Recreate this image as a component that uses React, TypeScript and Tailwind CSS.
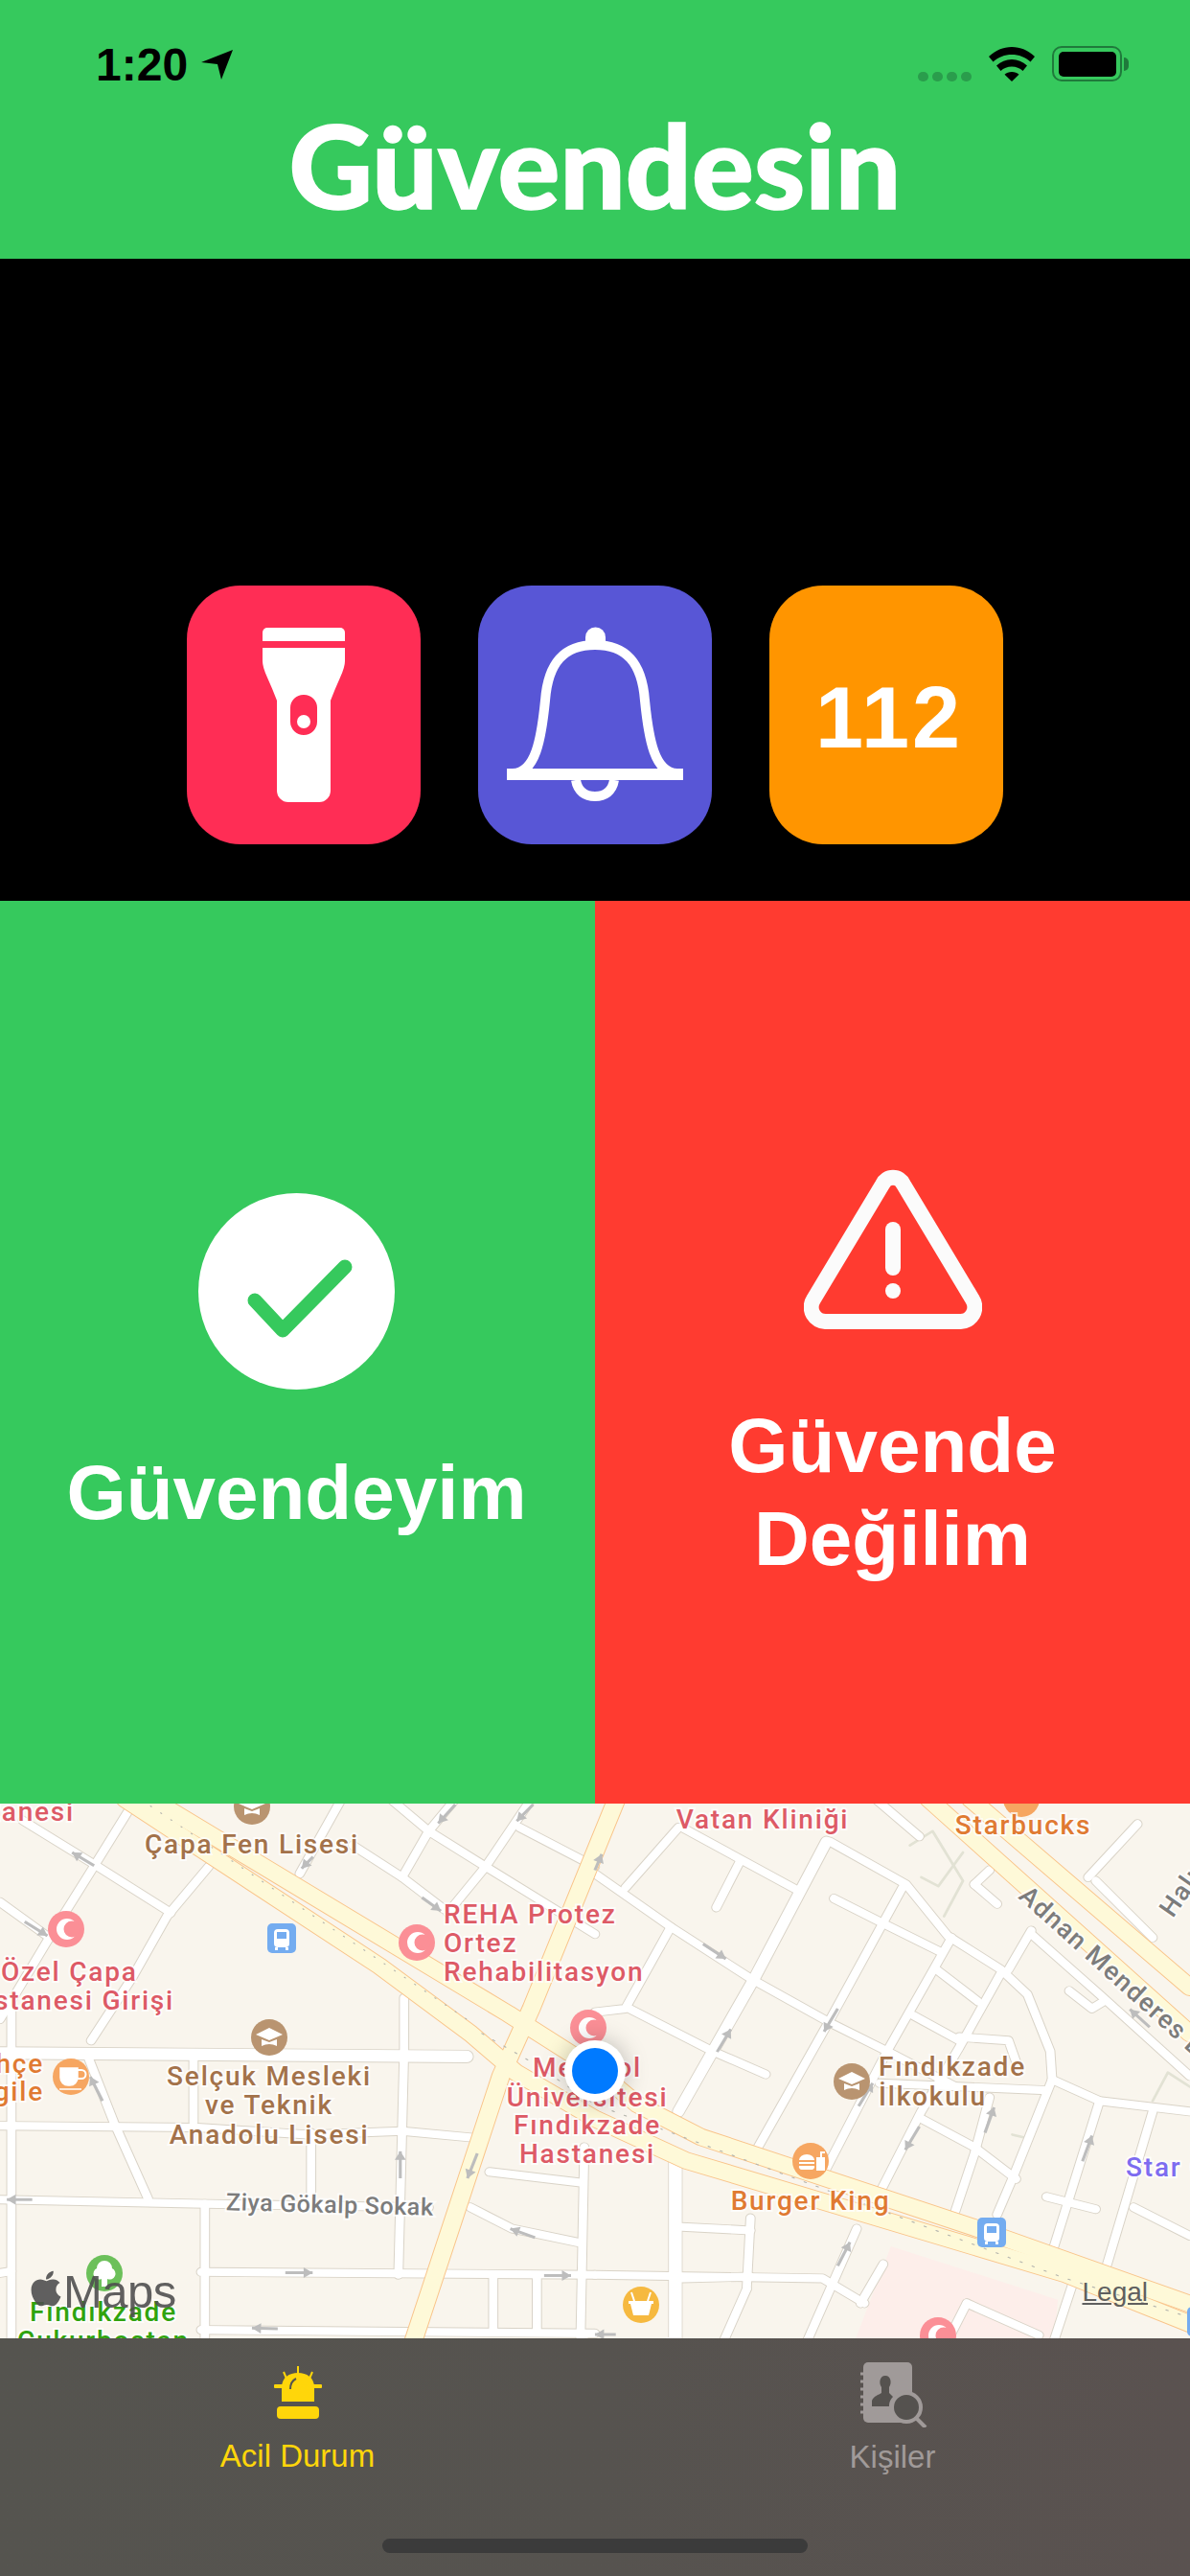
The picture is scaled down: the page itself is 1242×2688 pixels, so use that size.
import React from 'react';
import { FaApple } from 'react-icons/fa';

// road centre lines, in the coordinates of the left map crop (right half continues at x + 1568)
const RIGHT = 1568;
const shift = (pts: string) =>
  pts.split(' ').map((p) => {
    const [x, y] = p.split(',').map(Number);
    return `${x + RIGHT},${y}`;
  }).join(' ');

const smallRoads = [
  '60,80 250,205 450,340', '0,310 130,410', '340,50 250,205 130,410 40,570 0,640', '550,210 440,350 350,520 240,700',
  '900,20 790,230', '1200,20 1130,110 1060,240', '1400,20 1280,210 1180,340', '1030,20 1130,110 1280,210 1568,400',
  '930,150 1060,240 1170,330', '1370,100 1568,210', '1065,580 1065,730 1050,1360', '30,600 30,1545', '510,745 510,930',
  '230,740 300,930 390,1145', '0,940 520,945 810,965 1060,955 1260,975', '820,960 820,1150', '0,1148 540,1160 1130,1170',
  '1240,1170 1350,1230 1530,1270', '1290,1070 1530,1100', '540,1160 540,1545', '530,1352 1568,1360', '530,1515 1568,1525',
  '1300,1370 1300,1515', '1415,1370 1415,1515', '1540,1000 1530,1545', '0,1355 30,1350',
];

const smallRoadsRight = [
  '0,230 200,380 410,525 620,650 770,730 950,830', '620,140 820,260 930,405 1070,500 1140,570 1200,730 1205,810',
  '630,300 760,370 910,450', '320,325 380,200', '230,100 540,280', '810,270 620,640 430,1000', '940,410 770,730 610,1060',
  '1070,510 960,720 860,900 750,1130', '80,270 220,100', '0,620 80,610 200,380', '90,610 310,730 450,795', '310,730 220,900',
  '900,500 1010,590', '840,630 960,700', '960,690 1090,700 1110,760', '860,920 1000,1000 1110,1090', '1190,1140 1320,1175',
  '1205,810 1330,870 1568,900', '1205,810 1100,1090 1060,1190', '750,820 1190,840', '1040,860 1000,1020 950,1180',
  '1330,870 1210,1280', '1470,900 1350,1330', '1420,1170 1568,1250', '1150,400 1330,570 1568,800', '1150,390 1090,500',
  '1300,240 1430,90', '1320,250 1470,410', '1250,560 1310,610 1340,590', '1000,260 1060,315', '1000,260 1040,220',
  '740,20 855,125', '0,1360 600,1370 710,1440', '230,1225 410,1235', '230,1370 410,1365', '410,1200 400,1400',
  '690,1230 560,1545', '760,1330 700,1440', '980,1440 1170,1530', '980,1440 930,1545', '1270,1350 1210,1545', '400,1400 340,1545',
];

const boulevards = [
  '400,20 1340,625 1568,780 1680,880 1848,972 2568,1227 3136,1442',
  '330,20 1000,490 1240,680 1360,790 1568,920 1808,1038 2568,1281 2808,1358 3136,1498',
  '1625,20 1400,610 1320,800 1090,1545',
  '2448,20 3136,680',
  '2558,20 3136,550',
];

const arrows = [
  [248, 207, 190, 170], [65, 365, 125, 405], [270, 870, 238, 802], [1200, 35, 1155, 88], [1405, 35, 1362, 82], [825, 182, 795, 215],
  [1112, 297, 1162, 335], [85, 1148, 18, 1148], [1258, 1018, 1232, 1088], [1055, 1088, 1055, 1012], [1410, 1255, 1345, 1230],
  [752, 1354, 824, 1354], [1434, 1362, 1505, 1362], [732, 1512, 664, 1510],
].concat(
  [
    [285, 428, 345, 470], [322, 732, 358, 668], [640, 610, 604, 675], [695, 885, 732, 820], [855, 942, 818, 1008], [1028, 960, 1052, 888],
    [1285, 1040, 1310, 968], [1462, 662, 1410, 612], [640, 1335, 672, 1268], [0, 220, 18, 175], [55, 1528, 0, 1528],
  ].map(([a, b, c, d]) => [a + RIGHT, b, c + RIGHT, d]),
);

const labels: { t: string; x: number; y: number; c: string; a?: 'start' | 'middle' | 'end' }[] = [
  { t: 'Hastanesi', x: 78, y: 1900, c: '#dd5a66', a: 'end' },
  { t: 'Çapa Fen Lisesi', x: 263, y: 1934, c: '#a3724a', a: 'middle' },
  { t: 'Özel Çapa', x: 1, y: 2067, c: '#dd5a66' },
  { t: 'Hastanesi Girişi', x: 182, y: 2097, c: '#dd5a66', a: 'end' },
  { t: 'REHA Protez', x: 463, y: 2007, c: '#dd5a66' },
  { t: 'Ortez', x: 463, y: 2037, c: '#dd5a66' },
  { t: 'Rehabilitasyon', x: 463, y: 2067, c: '#dd5a66' },
  { t: 'Medipol', x: 613, y: 2167, c: '#dd5a66', a: 'middle' },
  { t: 'Üniversitesi', x: 613, y: 2198, c: '#dd5a66', a: 'middle' },
  { t: 'Fındıkzade', x: 613, y: 2227, c: '#dd5a66', a: 'middle' },
  { t: 'Hastanesi', x: 613, y: 2257, c: '#dd5a66', a: 'middle' },
  { t: 'Bahçe', x: 46, y: 2163, c: '#e07a32', a: 'end' },
  { t: 'Bilgile', x: 46, y: 2192, c: '#e07a32', a: 'end' },
  { t: 'Selçuk Mesleki', x: 281, y: 2176, c: '#a3724a', a: 'middle' },
  { t: 've Teknik', x: 281, y: 2206, c: '#a3724a', a: 'middle' },
  { t: 'Anadolu Lisesi', x: 281, y: 2237, c: '#a3724a', a: 'middle' },
  { t: 'Fındıkzade', x: 108, y: 2422, c: '#2fa30e', a: 'middle' },
  { t: 'Çukurbostan', x: 108, y: 2452, c: '#2fa30e', a: 'middle' },
  { t: 'Vatan Kliniği', x: 796, y: 1908, c: '#dd5a66', a: 'middle' },
  { t: 'Starbucks', x: 1068, y: 1914, c: '#e07a32', a: 'middle' },
  { t: 'Fındıkzade', x: 917, y: 2166, c: '#a3724a' },
  { t: 'İlkokulu', x: 917, y: 2197, c: '#a3724a' },
  { t: 'Star City', x: 1175, y: 2271, c: '#7d6cf0' },
  { t: 'Burger King', x: 846, y: 2306, c: '#e07a32', a: 'middle' },
  { t: 'File Market', x: 660, y: 2462, c: '#e07a32', a: 'middle' },
];

const Crescent = ({ x, y }: { x: number; y: number }) => (
  <g>
    <circle cx={x} cy={y} r={19} fill="#fb8f96" />
    <circle cx={x + 1} cy={y} r={11} fill="#fff" />
    <circle cx={x + 6} cy={y} r={8.5} fill="#fb8f96" />
  </g>
);

const Bus = ({ x, y }: { x: number; y: number }) => (
  <g>
    <rect x={x - 15} y={y - 15} width={30} height={31} rx={5} fill="#74acf0" />
    <rect x={x - 8} y={y - 9} width={16} height={19} rx={4} fill="#fff" />
    <rect x={x - 5} y={y - 6} width={10} height={7} fill="#74acf0" />
    <rect x={x - 7} y={y + 10} width={3} height={3} fill="#fff" />
    <rect x={x + 4} y={y + 10} width={3} height={3} fill="#fff" />
  </g>
);

const School = ({ x, y }: { x: number; y: number }) => (
  <g>
    <circle cx={x} cy={y} r={19} fill="#b99470" />
    <path d={`M${x - 14} ${y - 3}L${x} ${y - 10}L${x + 14} ${y - 3}L${x} ${y + 3}Z`} fill="#fff" />
    <path d={`M${x - 8} ${y + 2}V${y + 9}Q${x} ${y + 5} ${x + 8} ${y + 9}V${y + 2}L${x} ${y + 5}Z`} fill="#fff" />
  </g>
);

const FlashlightIcon = () => (
  <svg viewBox="0 0 244 270" className="h-full w-full">
    <path d="M79 58V49a5 5 0 0 1 5-5h76a5 5 0 0 1 5 5v9Z" fill="#fff" />
    <path
      fillRule="evenodd"
      fill="#fff"
      d="M79 65h86v14q0 6-5 17t-10 24v94a12 12 0 0 1-12 12h-32a12 12 0 0 1-12-12V120q-5-13-10-24t-5-17ZM122 114a13.500 13.500 0 0 0-14 14v14a14 14 0 0 0 28 0v-14a13.500 13.500 0 0 0-14-14Z"
    />
    <circle cx={122} cy={142} r={7} fill="#fff" />
  </svg>
);

const BellIcon = () => (
  <svg viewBox="0 0 244 270" className="h-full w-full" fill="none" stroke="#fff">
    <path d="M112 60V54a10.500 10.500 0 0 1 21 0v6Z" fill="#fff" stroke="none" />
    <path strokeWidth={10} d="M36 196C60 196 66 160 70 120C73 80 90 62 122 62C154 62 171 80 174 120C178 160 184 196 208 196" />
    <rect x={30} y={191} width={184} height={12} fill="#fff" stroke="none" />
    <path strokeWidth={10} d="M102 203C104 215 112 220 122 220C132 220 140 215 142 203" />
  </svg>
);

const WarningIcon = () => (
  <svg viewBox="0 0 186 169" className="h-[169px] w-[186px]" fill="none">
    <path stroke="#fbfbfb" strokeWidth={16} d="M82 18a12 12 0 0 1 22 0L176 138a15 15 0 0 1-13 23H23a15 15 0 0 1-13-23Z" strokeLinejoin="round" />
    <rect x={85} y={57} width={16} height={56} rx={8} fill="#fbfbfb" />
    <circle cx={93} cy={129} r={8} fill="#fbfbfb" />
  </svg>
);

const MapView = () => (
  <div className="relative h-[558px] overflow-hidden bg-[#f9f5ed] font-['Roboto',sans-serif]">
    <svg viewBox="0 1882 1242 558" className="block h-full w-full">
      <g transform="translate(0 1870) scale(0.396 0.3704)" fill="none" strokeLinejoin="round" strokeLinecap="round">
        <path d={`M${shift('780,1280 1220,1430 1210,1560 680,1560')}Z`} fill="#fdeeea" />
        <path d={`M${shift('830,150 890,110 970,250 920,350')}`} stroke="#e2e2d4" strokeWidth={7} />
        <path d={`M${shift('860,240 905,265 970,170')}`} stroke="#e2e2d4" strokeWidth={7} />
        <path d={`M${shift('1470,870 1510,790 1568,830')}`} stroke="#e2e2d4" strokeWidth={7} />
        <path d={`M${shift('1100,965 1140,975')}`} stroke="#e2e2d4" strokeWidth={7} />
        {smallRoads.map((p) => <polyline key={p} points={p} stroke="#d9d3c7" strokeWidth={27} />)}
        {smallRoadsRight.map((p) => <polyline key={p} points={shift(p)} stroke="#d9d3c7" strokeWidth={27} />)}
        <polyline points="0,735 1230,745" stroke="#d9d3c7" strokeWidth={38} />
        <polyline points={shift('610,140 420,525 220,900')} stroke="#d9d3c7" strokeWidth={34} />
        <polyline points={shift('212,1040 212,1545')} stroke="#d9d3c7" strokeWidth={38} />
        {smallRoads.map((p) => <polyline key={p} points={p} stroke="#fff" strokeWidth={22} />)}
        {smallRoadsRight.map((p) => <polyline key={p} points={shift(p)} stroke="#fff" strokeWidth={22} />)}
        <polyline points="0,735 1230,745" stroke="#fff" strokeWidth={33} />
        <polyline points={shift('610,140 420,525 220,900')} stroke="#fff" strokeWidth={29} />
        <polyline points={shift('212,1040 212,1545')} stroke="#fff" strokeWidth={34} />
        {boulevards.map((p) => <polyline key={p} points={p} stroke="#f9c48a" strokeWidth={50} />)}
        {boulevards.map((p) => <polyline key={p} points={p} stroke="#fef9d8" strokeWidth={45} />)}
        <polyline points="370,20 1230,640" stroke="#b5b5ae" strokeWidth={3} strokeDasharray="3 30" />
        <polyline points={`1270,680 1400,760 ${shift('0,880 1240,1370 1568,1480')}`} stroke="#b5b5ae" strokeWidth={3} strokeDasharray="6 28" />
        {arrows.map(([a, b, c, d]) => {
          const ang = Math.atan2(d - b, c - a);
          const h = (o: number) => `${c - 28 * Math.cos(ang + o)},${d - 28 * Math.sin(ang + o)}`;
          return (
            <g key={`${a}-${b}`}>
              <line x1={a} y1={b} x2={c} y2={d} stroke="#bdbdbd" strokeWidth={8} strokeLinecap="butt" />
              <polygon points={`${c},${d} ${h(0.55)} ${h(-0.55)}`} fill="#bdbdbd" />
            </g>
          );
        })}
      </g>

      <Crescent x={69} y={2013} />
      <Crescent x={435} y={2027} />
      <Crescent x={614} y={2116} />
      <Crescent x={979} y={2437} />
      <Bus x={294} y={2022} />
      <Bus x={1035} y={2329} />
      <Bus x={1254} y={2422} />
      <School x={263} y={1885} />
      <School x={281} y={2126} />
      <School x={889} y={2172} />
      <circle cx={74} cy={2167} r={19} fill="#f6a661" />
      <path d="M63 2158h18v10a8 8 0 0 1-8 8h-2a8 8 0 0 1-8-8ZM62 2180h23" fill="#fff" stroke="#fff" strokeWidth={1.5} />
      <path d="M81 2160h4a3 3 0 0 1 0 9h-4" fill="none" stroke="#fff" strokeWidth={2} />
      <circle cx={846} cy={2255} r={19} fill="#f6a661" />
      <path d="M834 2254a8 6 0 0 1 16 0ZM834 2256h16v2h-16ZM834 2260h16a3 3 0 0 1-3 4h-10a3 3 0 0 1-3-4ZM852 2251h9v14h-9Z" fill="#fff" />
      <path d="M857 2251v-5h4" stroke="#fff" strokeWidth={2} fill="none" />
      <circle cx={669} cy={2405} r={19} fill="#f6b940" />
      <path d="M658 2404h22l-3 12h-16ZM656 2401h26v3h-26Z" fill="#fff" />
      <path d="M662 2401l-3-9M676 2401l3-9" stroke="#fff" strokeWidth={2} />
      <circle cx={109} cy={2372} r={19} fill="#6cc05a" />
      <path d="M109 2359a8 8 0 0 1 8 8a6 6 0 0 1-5 11v8h-6v-8a6 6 0 0 1-5-11a8 8 0 0 1 8-8Z" fill="#fff" />
      <circle cx={1066} cy={1877} r={19} fill="#f6a661" />

      {labels.map((l) => (
        <text
          key={l.t + l.y}
          x={l.x}
          y={l.y}
          textAnchor={l.a ?? 'start'}
          fill={l.c}
          stroke="#fff"
          strokeOpacity={0.75}
          strokeWidth={4}
          paintOrder="stroke"
          className="text-[28px] font-medium tracking-[1.8px]"
        >
          {l.t}
        </text>
      ))}
      <text
        x={344}
        y={2309}
        textAnchor="middle"
        transform="rotate(1.5 344 2309)"
        fill="#7c7c7c"
        stroke="#fff"
        strokeOpacity={0.75}
        strokeWidth={4}
        paintOrder="stroke"
        className="text-[25px] font-medium tracking-[0.6px]"
      >
        Ziya Gökalp Sokak
      </text>
      <text
        x={1062}
        y={1980}
        transform="rotate(42 1062 1980)"
        fill="#7c7c7c"
        stroke="#fff"
        strokeOpacity={0.75}
        strokeWidth={4}
        paintOrder="stroke"
        className="text-[27px] font-medium tracking-[1.4px]"
      >
        Adnan Menderes Bulvarı
      </text>
      <text
        x={1224}
        y={2002}
        transform="rotate(-55 1224 2002)"
        fill="#7c7c7c"
        stroke="#fff"
        strokeOpacity={0.75}
        strokeWidth={4}
        paintOrder="stroke"
        className="text-[27px] font-medium tracking-[1.4px]"
      >
        Halıcılar
      </text>
    </svg>

    {/* location dot */}
    <div className="absolute left-[589px] top-[247px] flex h-[64px] w-[64px] items-center justify-center rounded-full bg-white shadow-[0_0_24px_rgba(0,0,0,0.25)]">
      <div className="h-[48px] w-[48px] rounded-full bg-[#007aff]" />
    </div>

    {/* apple maps attribution */}
    <div className="absolute bottom-[22px] left-[30px] flex items-center font-['Liberation_Sans',sans-serif] text-[#4f4f4f]/90">
      <FaApple className="mb-[6px] h-[42px] w-[36px]" />
      <span className="text-[49px] leading-[54px] tracking-[-0.5px]">Maps</span>
    </div>
    <span className="absolute bottom-[32px] right-[44px] font-['Liberation_Sans',sans-serif] text-[28px] leading-[32px] text-[#5f5f5f] underline">
      Legal
    </span>
  </div>
);

export default function App() {
  return (
    <div className="flex h-[2688px] w-[1242px] flex-col overflow-hidden bg-black font-['Liberation_Sans',sans-serif]">
      <header className="flex h-[270px] shrink-0 flex-col bg-[#36c95d]">
        <div className="flex items-start justify-between pl-[100px] pr-[64px] pt-[41px]">
          <div className="flex items-center gap-[14px]">
            <span className="text-[48px] font-bold leading-[54px] text-black">1:20</span>
            <svg viewBox="0 0 33 32" className="h-[32px] w-[33px]">
              <path d="M33 0L21 31L17 15L0 13Z" fill="#000" />
            </svg>
          </div>
          <div className="flex items-center pt-[7px]">
            <div className="mr-[18px] mt-[26px] flex gap-[4px]">
              <span className="h-[10px] w-[11px] rounded-full bg-[#2a9d4c]" />
              <span className="h-[10px] w-[11px] rounded-full bg-[#2a9d4c]" />
              <span className="h-[10px] w-[11px] rounded-full bg-[#2a9d4c]" />
              <span className="h-[10px] w-[11px] rounded-full bg-[#2a9d4c]" />
            </div>
            <svg viewBox="0 0 48 36" className="mr-[18px] h-[36px] w-[48px]" fill="#000">
              <path d="M24 0C33 0 41 3.500 48 10L43.500 15.500C38 10.500 31.500 8 24 8S10 10.500 4.500 15.500L0 10C7 3.500 15 0 24 0Z" />
              <path d="M24 13C30 13 35.500 15.200 40 19.500L35.500 25C32.500 22.200 28.500 20.500 24 20.500S15.500 22.200 12.500 25L8 19.500C12.500 15.200 18 13 24 13Z" />
              <path d="M24 26C27 26 29.500 27 31.500 28.800L24 36L16.500 28.800C18.500 27 21 26 24 26Z" />
            </svg>
            <div className="flex h-[37px] w-[73px] items-center justify-center rounded-[10px] border-[2.5px] border-[#1f7a3b]">
              <div className="h-[26px] w-[60px] rounded-[5px] bg-black" />
            </div>
            <div className="ml-[2px] h-[14px] w-[5px] rounded-r-full bg-[#1f7a3b]" />
          </div>
        </div>
        <h1 className="mt-[20px] text-center font-['Lato',sans-serif] text-[121px] font-black leading-[114px] text-white [-webkit-text-stroke:1.5px_white]">
          Güvendesin
        </h1>
      </header>

      <section className="flex h-[670px] shrink-0 items-end justify-center gap-[60px] pb-[59px]">
        <button className="h-[270px] w-[244px] rounded-[56px] bg-[#ff2d55]">
          <FlashlightIcon />
        </button>
        <button className="h-[270px] w-[244px] rounded-[56px] bg-[#5856d6]">
          <BellIcon />
        </button>
        <button className="flex h-[270px] w-[244px] items-center justify-center rounded-[56px] bg-[#ff9500] pl-[6px] pt-[6px] text-[90px] font-bold tracking-[3px] text-white">
          112
        </button>
      </section>

      <section className="grid h-[942px] shrink-0 grid-cols-2">
        <button className="flex flex-col items-center justify-start bg-[#36c95d] pr-[2px] pt-[305px]">
          <div className="flex h-[205px] w-[205px] items-center justify-center rounded-full bg-white">
            <svg viewBox="0 0 205 205" className="h-full w-full" fill="none">
              <path d="M59 112L88 143L153 77" stroke="#36c95d" strokeWidth={15} strokeLinecap="round" strokeLinejoin="round" />
            </svg>
          </div>
          <span className="mt-[62px] text-[80px] font-bold leading-[92px] text-white">Güvendeyim</span>
        </button>
        <button className="flex flex-col items-center justify-start bg-[#ff3b30] pt-[278px]">
          <WarningIcon />
          <span className="mt-[73px] text-[80px] font-bold leading-[97px] text-white">
            Güvende
            <br />
            Değilim
          </span>
        </button>
      </section>

      <MapView />

      <nav className="relative flex-1 bg-gradient-to-r from-[#55544f] via-[#56534f] to-[#5a5250]">
        <div className="grid grid-cols-2">
          <div className="flex flex-col items-center pt-[29px]">
            <svg viewBox="0 0 50 55" className="h-[55px] w-[50px]" fill="#ffd60a">
              <rect x={3} y={42} width={44} height={13} rx={4} />
              <path d="M8 37V22C8 12 16 7 25 7S42 12 42 22V37Z" />
              <rect x={0} y={19} width={50} height={4} rx={1} />
              <path d="M25 0V8M10 6l3 7M40 6l-3 7" stroke="#ffd60a" strokeWidth={2} />
              <path d="M17 24C17 18 19 15 23 13" stroke="#55544f" strokeWidth={2} fill="none" />
            </svg>
            <span className="mt-[20px] text-[33px] leading-[38px] text-[#ffd60a]">Acil Durum</span>
          </div>
          <div className="flex flex-col items-center pt-[25px]">
            <svg viewBox="0 0 70 68" className="ml-[3px] h-[68px] w-[70px]">
              <rect x={3} y={0} width={51} height={63} rx={5} fill="#a09a99" />
              <path d="M0 12h5M0 20h5M0 28h5M0 36h5M0 44h5M0 52h5" stroke="#a09a99" strokeWidth={3} />
              <path d="M12 46V40C14 35 19 34 22 32V26C19 22 20 14 26 14S33 22 30 26V32L34 36C30 40 30 44 30 46Z" fill="#55524f" />
              <circle cx={48} cy={47} r={15} fill="#55524f" stroke="#a09a99" strokeWidth={4} />
              <path d="M58 58L68 68" stroke="#a09a99" strokeWidth={4} />
            </svg>
            <span className="mt-[12px] text-[33px] leading-[38px] text-[#a09a99]">Kişiler</span>
          </div>
        </div>
        <div className="absolute bottom-[24px] left-[399px] h-[15px] w-[444px] rounded-full bg-[#3b3b3b]" />
      </nav>
    </div>
  );
}
